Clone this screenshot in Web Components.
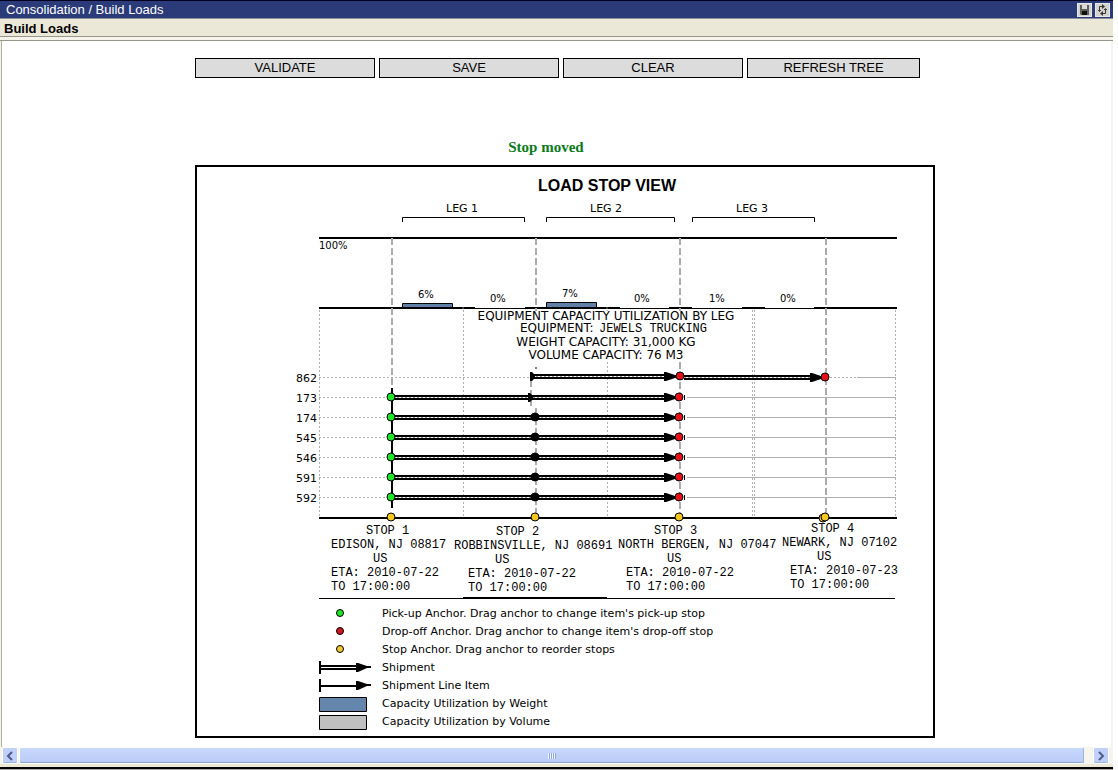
<!DOCTYPE html>
<html lang="en">
<head>
<meta charset="utf-8">
<title>Consolidation / Build Loads</title>
<style>
html,body{margin:0;background:#fff}
body{font-family:"Liberation Sans",Arial,sans-serif;color:#000}
</style>
</head>
<body>
<app-window>
  <title-bar slot="title">Consolidation / Build Loads</title-bar>
  <section-bar slot="section">Build Loads</section-bar>
  <action-bar>
    <action-button>VALIDATE</action-button>
    <action-button>SAVE</action-button>
    <action-button>CLEAR</action-button>
    <action-button>REFRESH TREE</action-button>
  </action-bar>
  <status-message>Stop moved</status-message>
  <load-panel>
    <span slot="heading">LOAD STOP VIEW</span>
    <load-chart></load-chart>
    <chart-legend>
      <legend-item kind="pickup">Pick-up Anchor. Drag anchor to change item's pick-up stop</legend-item>
      <legend-item kind="dropoff">Drop-off Anchor. Drag anchor to change item's drop-off stop</legend-item>
      <legend-item kind="stop">Stop Anchor. Drag anchor to reorder stops</legend-item>
      <legend-item kind="shipment">Shipment</legend-item>
      <legend-item kind="line">Shipment Line Item</legend-item>
      <legend-item kind="weight">Capacity Utilization by Weight</legend-item>
      <legend-item kind="volume">Capacity Utilization by Volume</legend-item>
    </chart-legend>
  </load-panel>
  <scroll-bar slot="scroll"></scroll-bar>
</app-window>
<script>
function define(name, render) {
  customElements.define(name, class extends HTMLElement {
    connectedCallback() {
      if (this.shadowRoot) return;
      this.attachShadow({ mode: 'open' }).innerHTML = render(this);
    }
  });
}

define('app-window', () => `
<style>
:host{display:flex;flex-direction:column;min-height:100vh;box-sizing:border-box;padding-right:5px}
.view{flex:1;display:flex;flex-direction:column;background:#f4f3ee;padding:0 2px 0 1px}
.edge{height:3px;background:#f6f4ea;border-bottom:1px solid #96968a;margin:0 -2px 0 -1px}
main{flex:1;background:#fff;border-left:1px solid #b0b0a0;padding:17px 0 9px 17px}
.foot{height:3px;background:#ece9d8;border-bottom:2px solid #000}
.base{height:1px;background:#aaa69c}
</style>
<slot name="title"></slot>
<slot name="section"></slot>
<div class="view"><div class="edge"></div><main><slot></slot></main><slot name="scroll"></slot></div>
<div class="foot"></div><div class="base"></div>`);

define('title-bar', () => `
<style>
:host{display:flex;align-items:center;justify-content:space-between;height:17px;padding:0 3px 0 6px;background:#2b3a78;border-top:1px solid #000020;border-bottom:1px solid #8c909c;color:#fff;font:13px/19px "Liberation Sans",Arial,sans-serif}
nav{display:flex;gap:3px}
h1{font:inherit;margin:0}
button{display:block;width:15px;height:14px;padding:0;border:1px solid #e8e8e8;background:#d4d2cc}
svg{display:block;margin:0 auto}
</style>
<h1><slot></slot></h1>
<nav>
<button aria-label="Save"><svg width="13" height="12" viewBox="0 0 13 12"><path d="M2 1h9v10H3L2 10z" fill="#606060"/><path d="M4 1h5v4H4z" fill="#dcdcdc"/><path d="M4 7h5v4H4z" fill="#101010"/></svg></button>
<button aria-label="Refresh"><svg width="13" height="12" viewBox="0 0 13 12"><path d="M7 2.500H3.500V7M2 6l1.500 1.500L5 6M6 9.500h3.500V5M8 6l1.500-1.500L11 6" fill="none" stroke="#383838"/><path d="M6 0l3 2.500L6 5zM7 7L4 9.500 7 12z" fill="#383838"/></svg></button>
</nav>`);

define('section-bar', () => `
<style>
:host{display:block;height:17px;padding:0 4px;background:#ece8d8;border-bottom:1px solid #96968a}
h2{margin:0;font:bold 13px/19px "Liberation Sans",Arial,sans-serif}
</style><h2><slot></slot></h2>`);

define('action-bar', () => `
<style>
:host{display:grid;grid-template-columns:180fr 180fr 180fr 173fr;gap:4px;max-width:725px;margin:0 auto;padding-right:15px}
</style><slot></slot>`);

define('action-button', () => `
<style>
:host{display:block}
button{display:block;width:100%;height:20px;padding:0;border:1px solid #000;border-radius:0;background:#dcdcdc;color:#000;font:13px/18px "Liberation Sans",Arial,sans-serif}
</style><button type="button"><slot></slot></button>`);

define('status-message', () => `
<style>
:host{display:block;max-width:702px;margin:60px auto 0;padding-right:38px;text-align:center;color:#087a18;font:bold 15px/18px "Liberation Serif",serif}
</style><div role="status"><slot></slot></div>`);

define('load-panel', () => `
<style>
:host{display:block;box-sizing:border-box;max-width:740px;margin:9px auto 0;border:2px solid #000;padding-bottom:6px}
h3{margin:0;padding:9px 0 4px 84px;text-align:center;font:bold 16px/20px "Liberation Sans",Arial,sans-serif}
</style><h3><slot name="heading"></slot></h3><slot></slot>`);

const dbl = (x1, x2, y) =>
  `<path d="M${x1} ${y}H${x2}" stroke="#000" stroke-width="5"/><path d="M${x1} ${y}H${x2}" stroke="#fff" stroke-width="1"/><path d="M${x1} ${y}H${x2}" stroke="#999" stroke-dasharray="2 2"/>`;
const tip = (x, y) => `<path d="M${x - 13} ${y - 4.5}h2l9 3h3v3h-3l-9 3h-2z"/>`;
const dot = (x, y, c) => `<circle cx="${x}" cy="${y}" r="4" fill="${c}" stroke="#000"/>`;
const GREEN = '#20e428', RED = '#e81018', GOLD = '#f4c81c';

define('load-chart', () => {
  const legs = [['LEG 1', 205, 328, 249], ['LEG 2', 349, 478, 393], ['LEG 3', 495, 618, 539]];
  const usage = [['6%', 221, 98], ['0%', 293, 102], ['7%', 365, 97], ['0%', 437, 102], ['1%', 512, 102], ['0%', 583, 102]];
  const rows = [['173', 197], ['174', 217], ['545', 237], ['546', 257], ['591', 277], ['592', 297]];
  const stops = [
    ['STOP 1', 'EDISON, NJ 08817', '2010-07-22', 334, 169, 134, 176, 134],
    ['STOP 2', 'ROBBINSVILLE, NJ 08691', '2010-07-22', 335, 299, 257, 298, 271],
    ['STOP 3', 'NORTH BERGEN, NJ 07047', '2010-07-22', 334, 457, 421, 470, 429],
    ['STOP 4', 'NEWARK, NJ 07102', '2010-07-23', 332, 614, 585, 620, 593]];
  const t = (x, y, s, c = '') => `<text x="${x}" y="${y}" class="${c}">${s}</text>`;
  return `
<style>
:host{display:block}
svg{display:block;width:100%;height:auto}
text{font:11px "DejaVu Sans",Verdana,sans-serif}
.s{font-size:10px}
.l{font-size:12px}
.m{font:12px "Liberation Mono","Courier New",monospace}
.c{text-anchor:middle}
</style>
<svg viewBox="0 0 736 400" role="img" aria-label="Load stop view">
<g fill="none" stroke="#000">
${legs.map(l => `<path d="M${l[1] + .5} 22V17.5H${l[2] - .5}V22"/>`).join('')}
<path d="M122 38H700M122 108H700M122 318H700" stroke-width="2"/>
<path d="M266 107.5v1M410 107.5v1M278 107.5h50M423 107.5h49M495 107.5h50M568 107.5h49" stroke="#fff"/>
<path d="M122 398.5H698"/><path d="M266 397.5H410"/>
</g>
<g fill="none" stroke="#b0b0b0" stroke-dasharray="2 2">
<path d="M122.5 110V317M266.5 110V317M410.5 110V317M555.5 110V317M557.5 110V317M698.5 110V317"/>
<path d="M122 177.5H334M633 177.5H660"/>
${rows.map(r => `<path d="M122 ${r[1] + .5}H194"/>`).join('')}
</g>
<path d="M660 177.5H699${rows.map(r => `M490 ${r[1] + .5}H699`).join('')}" stroke="#b0b0b0"/>
<path d="M195 38V190M339 38V112M339 208V317M483 38V112M483 162V317M629 38V317M334 180V206" fill="none" stroke="#aeaaaa" stroke-width="2" stroke-dasharray="7 3"/>
<path d="M338 168h2" stroke="#000"/>
<path d="M195 188V308" stroke="#000" stroke-width="2"/>
${legs.map(l => t(l[3], 12, l[0])).join('')}
${t(122, 49, '100%', 's')}
${usage.map(u => t(u[1], u[2], u[0], 's')).join('')}
<path d="M205.5 107.5v-4h50v4zM349.5 107.5v-5h50v5z" fill="#5f7fa6" stroke="#000"/>
<path d="M278 111H542V162H278z" fill="#fff"/>
${t(409, 120, 'EQUIPMENT CAPACITY UTILIZATION BY LEG', 'l c')}
${t(323, 132, 'EQUIPMENT:', 'l')}${t(402, 132, 'JEWELS TRUCKING', 'm')}
${t(409, 146, 'WEIGHT CAPACITY: 31,000 KG', 'l c')}
${t(409, 159, 'VOLUME CAPACITY: 76 M3', 'l c')}
${t(99, 182, '862')}
${dbl(335, 468, 176.5)}${tip(480, 176.5)}<path d="M333 172h2l3 3v3l-3 3h-2z"/>
${dbl(487, 614, 177.5)}${tip(626, 177.5)}${dot(483, 176, RED)}${dot(628, 177, RED)}
${rows.map(([n, y], i) => t(99, y + 5, n) + dbl(196, 469, y + .5) + tip(480, y + .5) +
  (i ? dot(338, y, '#000') : `<path d="M331 ${y - 4}h2l3 3v3l-3 3h-2z"/>`) + dot(194, y, GREEN) + dot(482, y, RED) +
  `<path d="M487.5 ${y - 2}v5" stroke="#000"/>`).join('')}
${dot(194, 317, GOLD)}${dot(338, 317, GOLD)}${dot(482, 317, GOLD)}
<path d="M621 318l5-5v9z"/>${dot(626, 318, GOLD)}${dot(628, 317, GOLD)}
${stops.map(([n, c, e, y, a, b, u, d]) => t(a, y, n, 'm') + t(b, y + 14, c, 'm') + t(u, y + 28, 'US', 'm') + t(d, y + 42, 'ETA: ' + e, 'm') + t(d, y + 56, 'TO 17:00:00', 'm')).join('')}
</svg>`;
});

define('chart-legend', () => `
<style>:host{display:block;padding:4px 16px 0 122px}</style><div role="list"><slot></slot></div>`);

const marks = {
  pickup: `<circle cx="21" cy="9" r="3.5" fill="${GREEN}" stroke="#000"/>`,
  dropoff: `<circle cx="21" cy="9" r="3.5" fill="#d01820" stroke="#000"/>`,
  stop: `<circle cx="21" cy="9" r="3.5" fill="#f0c838" stroke="#000"/>`,
  shipment: `<path d="M1 3V16" stroke="#000" stroke-width="2"/><path d="M2 8H38M2 11H38" stroke="#000" stroke-width="2"/><path d="M37 5h2l9 3h4v2h-4l-9 4h-2z"/>`,
  line: `<path d="M1 3V16M2 10H38" stroke="#000" stroke-width="2"/><path d="M37 5h2l9 3h4v2h-4l-9 4h-2z"/>`,
  weight: `<path d="M.5 3.5h47v14H.5z" fill="#6486ac" stroke="#000"/>`,
  volume: `<path d="M.5 3.5h47v14H.5z" fill="#c0c0c0" stroke="#000"/>`
};
define('legend-item', el => `
<style>
:host{display:grid;grid-template-columns:52px 1fr;column-gap:11px;align-items:start;height:18px;font:11px/20px "DejaVu Sans",Verdana,sans-serif}
svg{display:block}
</style><svg width="52" height="18" viewBox="0 0 52 18" aria-hidden="true">${marks[el.getAttribute('kind')]}</svg><span><slot></slot></span>`);

define('scroll-bar', () => `
<style>
:host{display:flex;height:17px;background:#f6f5ee;padding:0 2px 0 1px;gap:1px;align-items:stretch}
button{width:16px;padding:0;border:1px solid #fff;border-radius:2px;background:#c0d0fa;box-shadow:inset 0 -1px #9db4e0}
.arrow svg{display:block;margin:0 auto}
.thumb{flex:1;display:flex;align-items:center;justify-content:center;border:1px solid #fff;border-right:1px solid #a0b4d8;border-radius:2px;background:linear-gradient(#c8d8fc,#bacbf8);box-shadow:inset 0 -1px #8ca6d4;margin-right:8px}
.grip{width:8px;height:6px;background:repeating-linear-gradient(90deg,#f0f5ff 0 1px,#90a8dc 1px 2px)}
</style>
<button class="arrow" aria-label="Scroll left"><svg width="8" height="10" viewBox="0 0 8 10"><path d="M6 1L2 5l4 4" fill="none" stroke="#4a5e88" stroke-width="2"/></svg></button>
<div class="thumb"><div class="grip"></div></div>
<button class="arrow" aria-label="Scroll right"><svg width="8" height="10" viewBox="0 0 8 10"><path d="M2 1l4 4-4 4" fill="none" stroke="#4a5e88" stroke-width="2"/></svg></button>`);
</script>
</body>
</html>
